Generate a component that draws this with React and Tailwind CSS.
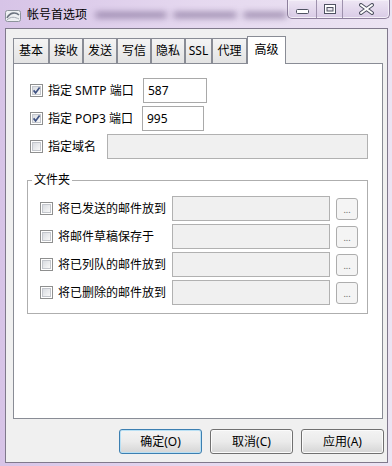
import React from 'react';

const CheckBox = ({ checked }) => (
  <span className="relative flex h-[13px] w-[13px] shrink-0 items-center justify-center border border-[#8e8f8f] bg-white">
    <span className="h-[9px] w-[9px] border border-[#c3c6cc] bg-linear-to-br from-[#d9dce1] to-[#f8f8f8]" />
    {checked && (
      <svg className="absolute left-[1px] top-[1px]" width="9" height="9" viewBox="0 0 9 9">
        <path d="M1.6 4.4 L3.6 6.9 L7.6 1.6" fill="none" stroke="#3f5282" strokeWidth="1.7" />
      </svg>
    )}
  </span>
);

const Field = ({ value, className, disabled }) => (
  <div
    className={
      'flex h-[25px] shrink-0 items-center border px-[4px] text-[12px] ' +
      (disabled ? 'border-[#b1b1b1] bg-[#f0f0f0] ' : 'border-[#a9a9a9] bg-white ') +
      className
    }
  >
    {value}
  </div>
);

const Tab = ({ label, className, active }) =>
  active ? (
    <div className={'relative z-10 -mb-px flex h-[28px] items-center justify-center border border-b-0 border-[#898c95] bg-white pb-[2px] text-[12px] ' + className}>
      {label}
    </div>
  ) : (
    <div className={'flex h-[25px] items-center justify-center border border-b-0 border-[#898c95] bg-linear-to-b from-[#f4f4f4] to-[#e3e3e3] text-[12px] ' + className}>
      {label}
    </div>
  );

const Button = ({ label, primary }) => (
  <button
    className={
      'flex h-[25px] w-[83px] items-center justify-center rounded-[3px] border bg-linear-to-b from-[#f3f3f3] via-[#ebebeb] to-[#d5d5d5] text-[12px] text-black ' +
      (primary ? 'border-[#3c7fb1] shadow-[inset_0_0_0_1px_#b9e0f4]' : 'border-[#707070] shadow-[inset_0_0_0_1px_#fbfbfb]')
    }
  >
    {label}
  </button>
);

const folderRows = ['将已发送的邮件放到', '将邮件草稿保存于', '将已列队的邮件放到', '将已删除的邮件放到'];

const TitleButtons = () => (
  <div className="mr-[2px] flex h-[19px] overflow-hidden rounded-b-[5px] border border-t-0 border-[#8d7f9c] bg-linear-to-b from-[#eee6f4] to-[#d9cbe6] shadow-[inset_0_0_0_1px_#f4eff8]">
    <div className="flex w-[29px] items-end justify-center border-r border-[#9e91ad] pb-[4px]">
      <svg width="13" height="5" viewBox="0 0 13 5">
        <rect x="0.5" y="0.5" width="12" height="4" rx="1" fill="#fff" stroke="#4f5262" />
      </svg>
    </div>
    <div className="flex w-[26px] items-center justify-center border-r border-[#9e91ad]">
      <svg width="12" height="10" viewBox="0 0 12 10">
        <rect x="0.5" y="0.5" width="11" height="9" fill="#fff" stroke="#4f5262" />
        <rect x="3" y="3.5" width="6" height="3.5" fill="#e9e6ee" stroke="#4f5262" />
      </svg>
    </div>
    <div className="flex w-[46px] items-center justify-center">
      <svg width="17" height="12" viewBox="0 0 17 12">
        <path d="M3 2 L14 10 M14 2 L3 10" stroke="#4f5262" strokeWidth="4" strokeLinecap="round" />
        <path d="M3 2 L14 10 M14 2 L3 10" stroke="#ffffff" strokeWidth="2" strokeLinecap="round" />
      </svg>
    </div>
  </div>
);

export default function App() {
  return (
    <div className="flex h-[466px] w-[392px] flex-col bg-linear-to-r from-[#d7c4e7] via-[#e5d8ef] to-[#ece4f3] font-['Noto_Sans','Noto_Sans_CJK_SC',sans-serif] text-black">
      {/* title bar */}
      <div className="flex h-[28px] shrink-0 items-start justify-between">
        <div className="flex h-[28px] items-center pl-[5px] pt-[2px]">
          <svg width="16" height="13" viewBox="0 0 16 13">
            <rect x="0.5" y="1.5" width="15" height="11" rx="2" fill="#eef0f3" stroke="#8d939c" />
            <path d="M2 9 C5 3, 11 3, 14 6" fill="none" stroke="#6c7480" strokeWidth="1.6" />
            <path d="M2 11 C6 7, 10 8, 14 10" fill="none" stroke="#a4aab3" strokeWidth="1" />
          </svg>
          <span className="ml-[6px] text-[12px] leading-[16px]">帐号首选项</span>
          <div className="ml-[8px] flex items-center gap-[6px] opacity-70">
            <span className="h-[6px] w-[72px] rounded-full bg-[#7d6a93] blur-[3px]" />
            <span className="h-[6px] w-[64px] rounded-full bg-[#7d6a93] blur-[3px]" />
            <span className="h-[6px] w-[44px] rounded-full bg-[#7d6a93] blur-[3px]" />
          </div>
        </div>
        <TitleButtons />
      </div>

      {/* client area */}
      <div className="ml-[5px] flex h-[435px] w-[383px] flex-col border border-[#80798c] bg-[#f0f0f0]">
        <div className="flex items-end pl-[7px] pt-[7px]">
          <Tab label="基本" className="w-[36px]" />
          <Tab label="接收" className="w-[34px]" />
          <Tab label="发送" className="w-[34px]" />
          <Tab label="写信" className="w-[34px]" />
          <Tab label="隐私" className="w-[34px]" />
          <Tab label="SSL" className="w-[27px]" />
          <Tab label="代理" className="w-[35px]" />
          <Tab label="高级" className="w-[39px]" active />
        </div>

        <div className="ml-[7px] h-[356px] w-[370px] border border-[#898c95] bg-white pt-[14px] text-[12px] leading-[16px]">
          <div className="flex h-[25px] items-center pl-[16px]">
            <CheckBox checked />
            <span className="ml-[5px] w-[95px]">指定 SMTP 端口</span>
            <Field value="587" className="w-[64px]" />
          </div>
          <div className="mt-[3px] flex h-[25px] items-center pl-[16px]">
            <CheckBox checked />
            <span className="ml-[5px] w-[94px]">指定 POP3 端口</span>
            <Field value="995" className="w-[62px]" />
          </div>
          <div className="mt-[3px] flex h-[25px] items-center pl-[16px]">
            <CheckBox />
            <span className="ml-[5px] w-[59px]">指定域名</span>
            <Field value="" className="w-[261px]" disabled />
          </div>

          <fieldset className="ml-[13px] mt-[13px] w-[341px] border border-[#aeaeae] pb-[8px]">
            <legend className="ml-[4px] px-[2px] leading-[16px]">文件夹</legend>
            {folderRows.map((label, i) => (
              <div key={label} className={'flex h-[25px] items-center pl-[12px] ' + (i === 0 ? 'mt-[8px]' : 'mt-[3px]')}>
                <CheckBox />
                <span className="ml-[5px] w-[114px]">{label}</span>
                <Field value="" className="w-[158px]" disabled />
                <div className="ml-[6px] flex h-[22px] w-[22px] items-end justify-center rounded-[3px] border border-[#adadad] bg-[#f4f4f4] pb-[5px] text-[9px] leading-none text-[#666]">
                  ...
                </div>
              </div>
            ))}
          </fieldset>
        </div>

        <div className="ml-[113px] mt-[10px] flex gap-[8px]">
          <Button label="确定(O)" primary />
          <Button label="取消(C)" />
          <Button label="应用(A)" />
        </div>
      </div>
    </div>
  );
}
